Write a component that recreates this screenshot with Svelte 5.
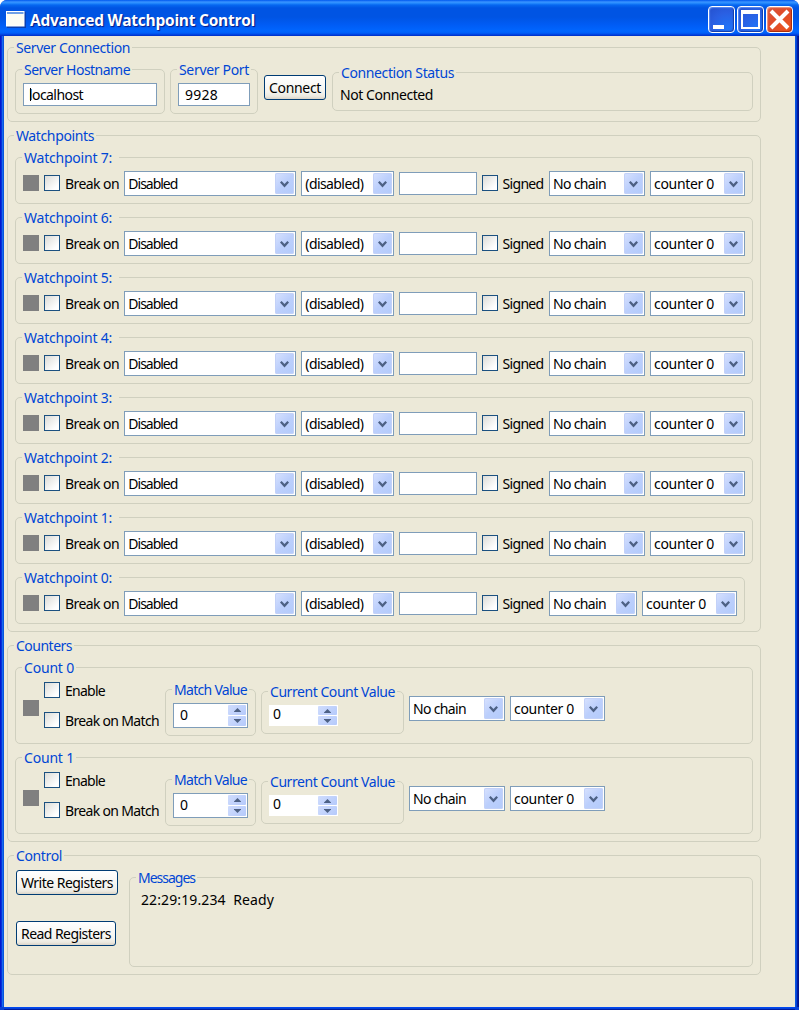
<script>
  const watchpoints = [7, 6, 5, 4, 3, 2, 1, 0];
  const counters = [0, 1];

  // Spread the letters so that a label takes exactly its designed width.
  function fit(node, width) {
    const natural = node.getBoundingClientRect().width;
    const count = node.textContent.length;
    node.style.letterSpacing = `${(width - natural) / count}px`;
  }
</script>

{#snippet label(text, width)}
  <span class="text" use:fit={width}>{text}</span>
{/snippet}

{#snippet legend(text, width)}
  <div class="legend">{@render label(text, width)}</div>
{/snippet}

{#snippet combo(text, textWidth, size)}
  <div class="combo {size}">
    {@render label(text, textWidth)}
    <div class="drop">
      <svg width="9" height="7" viewBox="0 0 9 7"><path d="M0 1.6 1.6 0 4.5 2.9 7.4 0 9 1.6 4.5 6.4Z" fill="#4d6185" /></svg>
    </div>
  </div>
{/snippet}

{#snippet spinner(kind)}
  <div class="spinner {kind}">
    {@render label('0', 8)}
    <div class="steps">
      <div class="step"><svg width="7" height="4" viewBox="0 0 7 4"><path d="M0 4V3.5L3.5 0 7 3.5V4Z" fill="#4d6185" /></svg></div>
      <div class="step"><svg width="7" height="4" viewBox="0 0 7 4"><path d="M0 0V.5L3.5 4 7 .5V0Z" fill="#4d6185" /></svg></div>
    </div>
  </div>
{/snippet}

<div class="window">
  <header>
    <svg class="app-icon" width="20" height="17" viewBox="0 0 20 17">
      <rect x="1" y="1" width="19" height="16" fill="#0b3fae" />
      <rect width="18.5" height="15.5" fill="#fff" />
      <rect x="1" y="1" width="16.5" height="2" fill="#6f9fe6" />
      <rect x="1" y="3" width="16.5" height="11.5" fill="#fcfcf4" />
    </svg>
    <h1>{@render label('Advanced Watchpoint Control', 225)}</h1>
    <div class="caption">
      <div class="cap"><svg viewBox="0 0 27 27"><rect x="5" y="19" width="11" height="4" fill="#fff" /></svg></div>
      <div class="cap"><svg viewBox="0 0 27 27"><path d="M4 4H23V23H4ZM6 8V21H21V8Z" fill="#fff" fill-rule="evenodd" /></svg></div>
      <div class="cap close"><svg viewBox="0 0 27 27"><path d="M5 5 22 22M22 5 5 22" stroke="#fff" stroke-width="4" /></svg></div>
    </div>
  </header>

  <main>
    <section class="group server">
      {@render legend('Server Connection', 114)}
      <div class="group host">
        {@render legend('Server Hostname', 106)}
        <div class="field"><i class="caret"></i>{@render label('localhost', 54)}</div>
      </div>
      <div class="group port">
        {@render legend('Server Port', 70)}
        <div class="field">{@render label('9928', 33)}</div>
      </div>
      <button class="connect">{@render label('Connect', 52)}</button>
      <div class="group status">
        {@render legend('Connection Status', 113)}
        {@render label('Not Connected', 93)}
      </div>
    </section>

    <section class="group points">
      {@render legend('Watchpoints', 78)}
      {#each watchpoints as n}
        <div class="group point" class:last={n === 0}>
          {@render legend(`Watchpoint ${n}:`, 88)}
          <div class="lamp"></div>
          <div class="check"></div>
          <div class="break">{@render label('Break on', 54)}</div>
          {@render combo('Disabled', 49, 'wide')}
          {@render combo('(disabled)', 58, 'mid')}
          <div class="field value"></div>
          <div class="check"></div>
          <div class="signed">{@render label('Signed', 41)}</div>
          {@render combo('No chain', 53, n === 0 ? 'chain-short' : 'chain')}
          {@render combo('counter 0', 60, 'counter')}
        </div>
      {/each}
    </section>

    <section class="group counts">
      {@render legend('Counters', 56)}
      {#each counters as n}
        <div class="group count">
          {@render legend(`Count ${n}`, 50)}
          <div class="lamp"></div>
          <div class="options">
            <div class="option"><div class="check"></div>{@render label('Enable', 40)}</div>
            <div class="option"><div class="check"></div>{@render label('Break on Match', 94)}</div>
          </div>
          <div class="group match">
            {@render legend('Match Value', 73)}
            {@render spinner('boxed')}
          </div>
          <div class="group current">
            {@render legend('Current Count Value', 125)}
            {@render spinner('plain')}
          </div>
          {@render combo('No chain', 53, 'chain')}
          {@render combo('counter 0', 60, 'counter')}
        </div>
      {/each}
    </section>

    <section class="group control">
      {@render legend('Control', 46)}
      <div class="buttons">
        <button class="write">{@render label('Write Registers', 92)}</button>
        <button class="read">{@render label('Read Registers', 90)}</button>
      </div>
      <div class="group messages">
        {@render legend('Messages', 57)}
        {@render label('22:29:19.234\u00a0 Ready', 133)}
      </div>
    </section>
  </main>
</div>

<style>
  :global(body) { margin: 0; background: #fff; }
  * { box-sizing: border-box; }
  .window {
    width: 799px; height: 1010px; overflow: hidden;
    display: flex; flex-direction: column;
    border-radius: 7px 7px 0 0;
    font: 14px/18px "Noto Sans", "Open Sans", sans-serif;
    color: #000;
    background: #0842d8;
  }
  .text { display: inline-block; white-space: pre; flex: none; }

  header {
    height: 36px; flex: none;
    display: flex; align-items: center;
    padding: 3px 6px 0 6px;
    background: linear-gradient(#0058ee 0, #3a93ff 2px, #288eff 3px, #0667f0 5px, #0054e3 8px, #0054e3 17px, #005cf5 25px, #0066ff 31px, #0060f8 33px, #003ddb 35px, #002fc0 36px);
  }
  .app-icon { display: block; margin-top: -1px; }
  h1 {
    margin: 1px 0 0 4px; flex: 1;
    font: bold 15.5px/20px "Open Sans", "Noto Sans", sans-serif;
    color: #fff; text-shadow: 1px 1px 1px #0a1883;
  }
  .caption { display: flex; gap: 2px; }
  .cap {
    width: 27px; height: 27px; border: 1px solid #fff; border-radius: 4px;
    background: radial-gradient(circle at 75% 85%, #1f74f8 0, #2a5fe2 55%, #2450cd 100%);
    box-shadow: inset -1px -1px 1px #153ca8, inset 1px 1px 1px #5b8bf2;
  }
  .cap svg { display: block; width: 27px; height: 27px; margin: -1px; }
  .cap.close {
    background: radial-gradient(circle at 80% 80%, #ea5420 0, #df4c2b 55%, #d65a41 100%);
    box-shadow: inset -1px -1px 1px #a52c0c, inset 1px 1px 1px #ee9a85;
  }

  main {
    flex: 1; margin: 0 4px 3px;
    background: #ece9d8;
    box-shadow: -1px 0 #0855dd, -2px 0 #166aee, -3px 0 #0831d9, -4px 0 #0019cf,
      1px 0 #0855dd, 2px 0 #0441d8, 3px 0 #001da0, 4px 0 #00138c,
      0 1px #0048f1, 0 2px #0441d8, 0 3px #001da0;
    padding: 11px 34px 0 3px;
    display: flex; flex-direction: column; gap: 13px;
  }

  .group {
    position: relative; flex: none;
    border: 1px solid #d0d0bf; border-radius: 5px;
    display: flex; align-items: flex-start;
  }
  .legend {
    position: absolute; left: 6px; top: -9px; height: 18px;
    padding: 0 2px; background: #ece9d8; color: #0046d5;
    white-space: nowrap;
  }
  .point > .legend { padding-right: 7px; }

  .field {
    height: 23px; border: 1px solid #7f9db9; background: #fff;
    display: flex; align-items: center; padding-left: 6px;
  }
  .caret { width: 1px; height: 13px; background: #000; margin-right: -2px; }

  button {
    height: 25px; padding: 1px 0 0; margin: 0; flex: none;
    display: flex; align-items: center; justify-content: center;
    font: inherit; color: #000;
    border: 1px solid #003c74; border-radius: 3px;
    background: linear-gradient(#fff, #f4f3ee 70%, #ece9e0 88%, #dad4c8);
  }

  .server { height: 75px; }
  .host { width: 150px; height: 45px; margin: 21px 0 0 7px; padding: 13px 7px 0; }
  .port { width: 88px; height: 45px; margin: 21px 0 0 5px; padding: 13px 7px 0; }
  .host .field, .port .field { flex: 1; }
  .connect { width: 62px; margin: 27px 0 0 6px; }
  .status { width: 421px; height: 39px; margin: 24px 0 0 6px; padding: 13px 0 0 7px; }

  .points { height: 497px; flex-direction: column; padding: 21px 7px 0; gap: 13px; }
  .point { width: 738px; height: 47px; padding: 13px 7px 7px; align-items: center; }
  .point.last { width: 730px; }
  .lamp { width: 16px; height: 16px; background: #808080; margin-right: 5px; flex: none; }
  .check {
    width: 16px; height: 16px; border: 1px solid #1c5180; flex: none;
    background: linear-gradient(135deg, #dcdcd7, #fff 80%);
  }
  .point .lamp, .point .check { margin-top: -1px; }
  .break { width: 59px; margin: 1px 0 0 5px; }
  .signed { width: 47px; margin: 1px 0 0 5px; }
  .value { width: 78px; margin: 0 5px; }

  .combo {
    height: 25px; flex: none; border: 1px solid #7f9db9; background: #fff;
    display: flex; align-items: center; justify-content: space-between;
    padding: 1px 1px 1px 3px;
  }
  .combo .text { margin-top: 1px; }
  .wide { width: 172px; margin-left: 1px; }
  .mid { width: 93px; margin-left: 5px; }
  .chain { width: 96px; }
  .chain-short { width: 88px; }
  .counter { width: 95px; margin-left: 5px; }
  .drop {
    width: 19px; height: 21px; border-radius: 2px;
    display: flex; align-items: center; justify-content: center;
    padding-top: 1px;
    background: linear-gradient(135deg, #d8e2fe, #bccffc 50%, #b3cbfb);
    box-shadow: inset 0 0 0 1px #c3d1f8;
  }
  .drop svg { display: block; }

  .counts { height: 197px; flex-direction: column; padding: 21px 7px 0; gap: 13px; }
  .count { width: 738px; height: 77px; padding-left: 7px; }
  .count > .lamp { margin-top: 32px; }
  .options { width: 121px; padding-top: 14px; display: flex; flex-direction: column; gap: 14px; }
  .option { height: 16px; display: flex; align-items: center; gap: 5px; }
  .option .text { margin-top: 2px; }
  .match { width: 91px; height: 47px; margin-top: 21px; padding: 13px 7px; }
  .current { width: 143px; height: 43px; margin: 23px 5px 0; padding: 13px 7px; }
  .count > .combo { margin-top: 28px; }
  .spinner { background: #fff; display: flex; justify-content: space-between; align-items: center; }
  .boxed { width: 75px; height: 25px; border: 1px solid #7f9db9; padding: 0 1px 0 6px; }
  .boxed .text { margin-top: -1px; }
  .plain { width: 69px; height: 21px; padding: 0 1px 0 4px; }
  .plain .text { margin-top: -3px; }
  .steps { display: flex; flex-direction: column; gap: 1px; }
  .step {
    width: 18px; height: 10px; border-radius: 1px;
    display: flex; align-items: center; justify-content: center;
    background: linear-gradient(135deg, #cfdcfd, #b5cafb);
  }
  .plain .step { width: 19px; height: 9px; }
  .step svg { display: block; }

  .control { height: 120px; padding-left: 8px; }
  .buttons { width: 113px; padding-top: 14px; display: flex; flex-direction: column; gap: 26px; }
  .write { width: 102px; }
  .read { width: 100px; }
  .messages { width: 624px; height: 90px; margin-top: 21px; padding: 13px 0 0 11px; }
</style>
